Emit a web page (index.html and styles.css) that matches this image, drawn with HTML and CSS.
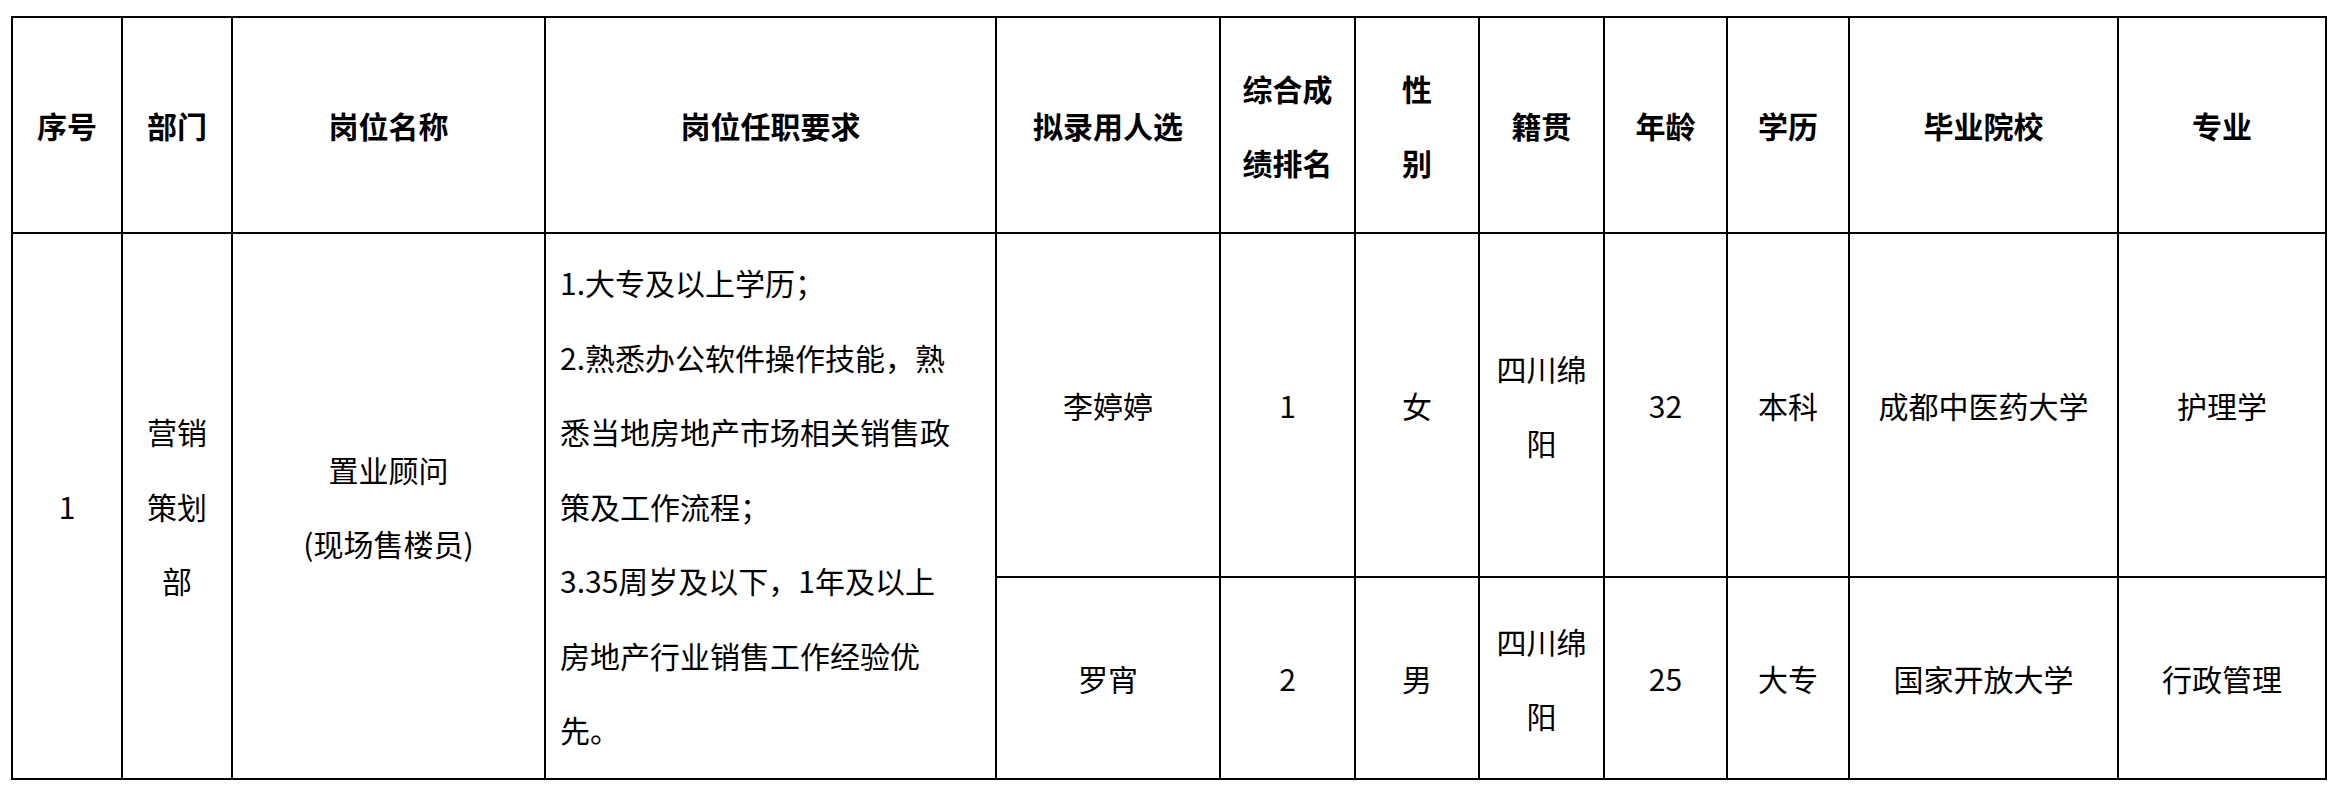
FILE: index.html
```html
<!DOCTYPE html>
<html lang="zh-CN">
<head>
<meta charset="utf-8">
<title>拟录用人选公示</title>
<link rel="stylesheet" href="styles.css">
</head>
<body>
<div class="sheet">
  <div class="cell head">序号</div>
  <div class="cell head">部门</div>
  <div class="cell head">岗位名称</div>
  <div class="cell head">岗位任职要求</div>
  <div class="cell head">拟录用人选</div>
  <div class="cell head">综合成<br>绩排名</div>
  <div class="cell head">性<br>别</div>
  <div class="cell head">籍贯</div>
  <div class="cell head">年龄</div>
  <div class="cell head">学历</div>
  <div class="cell head">毕业院校</div>
  <div class="cell head">专业</div>

  <div class="cell span2">1</div>
  <div class="cell span2">营销<br>策划<br>部</div>
  <div class="cell span2">置业顾问<br>(现场售楼员)</div>
  <div class="cell span2 req">1.大专及以上学历；<br>2.熟悉办公软件操作技能，熟<br>悉当地房地产市场相关销售政<br>策及工作流程；<br>3.35周岁及以下，1年及以上<br>房地产行业销售工作经验优<br>先。</div>
  <div class="cell">李婷婷</div>
  <div class="cell">1</div>
  <div class="cell">女</div>
  <div class="cell">四川绵<br>阳</div>
  <div class="cell">32</div>
  <div class="cell">本科</div>
  <div class="cell">成都中医药大学</div>
  <div class="cell">护理学</div>

  <div class="cell">罗宵</div>
  <div class="cell">2</div>
  <div class="cell">男</div>
  <div class="cell">四川绵<br>阳</div>
  <div class="cell">25</div>
  <div class="cell">大专</div>
  <div class="cell">国家开放大学</div>
  <div class="cell">行政管理</div>
</div>
</body>
</html>
```
FILE: styles.css
```css
html, body {
  margin: 0;
  padding: 0;
  background: #ffffff;
}

body {
  font-family: "Noto Sans CJK SC", "Noto Sans", sans-serif;
  color: #000000;
}

.sheet {
  display: inline-grid;
  grid-template-columns: 110px 110px 313px 451px 224px 135px 124px 125px 123px 122px 269px 208px;
  grid-template-rows: 216px 344px 202px;
  margin: 16px 0 0 11px;
  border-top: 2px solid #000;
  border-left: 2px solid #000;
}

.cell {
  box-sizing: border-box;
  border-right: 2px solid #000;
  border-bottom: 2px solid #000;
  display: flex;
  align-items: center;
  justify-content: center;
  text-align: center;
  font-size: 30px;
  line-height: 74.5px;
  white-space: nowrap;
}

.head {
  font-weight: 700;
  line-height: 74px;
}

.span2 {
  grid-row: span 2;
}

.req {
  justify-content: flex-start;
  text-align: left;
  padding-left: 14px;
}
```
